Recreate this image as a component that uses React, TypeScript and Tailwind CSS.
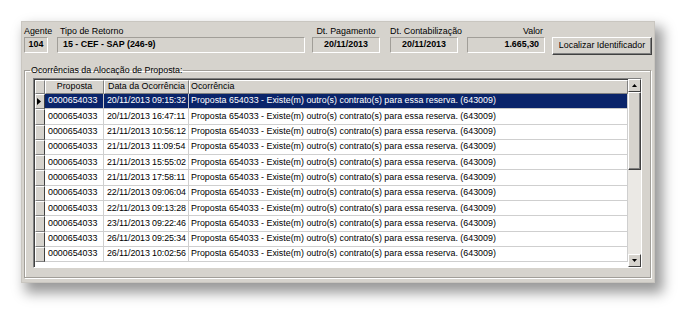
const rows = [
  "20/11/2013 09:15:32",
  "20/11/2013 16:47:11",
  "21/11/2013 10:56:12",
  "21/11/2013 11:09:54",
  "21/11/2013 15:55:02",
  "21/11/2013 17:58:11",
  "22/11/2013 09:06:04",
  "22/11/2013 09:13:28",
  "23/11/2013 09:22:46",
  "26/11/2013 09:25:34",
  "26/11/2013 10:02:56",
];

const msg = "Proposta 654033 - Existe(m) outro(s) contrato(s) para essa reserva. (643009)";

const Field = ({ children, className }: { children: React.ReactNode; className: string }) => (
  <div
    className={`flex h-[16px] items-center border border-t-[#a19e98] border-l-[#a19e98] border-b-white border-r-white bg-[#d6d3cd] px-[5px] font-bold ${className}`}
  >
    {children}
  </div>
);

const Label = ({ children, className = "" }: { children: React.ReactNode; className?: string }) => (
  <div className={`h-[11px] whitespace-nowrap leading-[11px] ${className}`}>{children}</div>
);

const Arrow = ({ down }: { down?: boolean }) => (
  <div className="flex h-[13px] w-[13px] items-center justify-center border border-t-white border-l-white border-b-[#404040] border-r-[#404040] bg-[#d6d3cd]">
    <svg width="5" height="3" viewBox="0 0 5 3">
      <polygon points={down ? "0,0 5,0 2.5,3" : "0,3 5,3 2.5,0"} fill="#000" />
    </svg>
  </div>
);

const App = () => {
  return (
    <div className="min-h-screen bg-white pl-[21px] pt-[21px] font-['Liberation_Sans',Arial,sans-serif] text-[8.9px] text-black">
      <div className="h-[262px] w-[634px] border border-[#c9c6c0] bg-[#d6d3cd] px-[2px] pt-[4px] shadow-[6px_8px_12px_2px_rgba(0,0,0,0.4)]">
        {/* top fields */}
        <div className="flex items-start">
          <div className="flex w-[24px] flex-col">
            <Label>Agente</Label>
            <Field className="justify-center">104</Field>
          </div>
          <div className="ml-[9px] flex w-[248px] flex-col">
            <Label className="pl-[3px]">Tipo de Retorno</Label>
            <Field className="justify-start">15 - CEF - SAP (246-9)</Field>
          </div>
          <div className="ml-[7px] flex w-[68px] flex-col">
            <Label className="text-center">Dt. Pagamento</Label>
            <Field className="justify-center">20/11/2013</Field>
          </div>
          <div className="ml-[10px] flex w-[68px] flex-col">
            <Label className="text-center">Dt. Contabilização</Label>
            <Field className="justify-center">20/11/2013</Field>
          </div>
          <div className="ml-[9px] flex w-[78px] flex-col">
            <Label className="pr-[2px] text-right">Valor</Label>
            <Field className="justify-end">1.665,30</Field>
          </div>
          <button className="ml-[7px] mt-[11px] flex h-[18px] w-[100px] items-center justify-center whitespace-nowrap border border-t-white border-l-white border-b-[#404040] border-r-[#404040] bg-[#d6d3cd] shadow-[inset_-1px_-1px_0_#808080]">
            Localizar Identificador
          </button>
        </div>

        {/* group box */}
        <fieldset className="mt-[10px] h-[213px] w-[626px] border border-[#a19e98] px-[8px] pb-[6px] pt-[2px] shadow-[inset_1px_1px_0_#fff,1px_1px_0_#fff]">
          <legend className="-ml-[3px] px-[1px] leading-[11px]">Ocorrências da Alocação de Proposta:</legend>
          <div className="flex h-[190px] w-[609px] border border-t-[#808080] border-l-[#808080] border-b-white border-r-white bg-white shadow-[inset_1px_1px_0_#404040]">
            <div className="flex flex-1 flex-col pl-[1px] pt-[1px]">
              {/* header */}
              <div className="flex h-[14px] bg-[#d6d3cd]">
                <div className="w-[10px] border border-t-white border-l-white border-b-[#808080] border-r-[#808080]" />
                <div className="flex w-[59px] items-center justify-center border border-t-white border-l-white border-b-[#808080] border-r-[#808080]">
                  Proposta
                </div>
                <div className="flex w-[85px] items-center justify-center border border-t-white border-l-white border-b-[#808080] border-r-[#808080]">
                  Data da Ocorrência
                </div>
                <div className="flex flex-1 items-center border border-t-white border-l-white border-b-[#808080] border-r-[#808080] pl-[1px]">
                  Ocorrência
                </div>
              </div>
              {rows.map((d, i) => {
                const sel = i === 0;
                const cell = sel
                  ? "bg-[#0a246a] text-white border-r border-b border-[#c8c8c8]"
                  : "bg-white border-r border-b border-[#cfcfcf]";
                return (
                  <div key={d} className="flex h-[15.3px]">
                    <div className="flex w-[10px] items-center border border-t-white border-l-white border-b-[#808080] border-r-[#404040] bg-[#d6d3cd] pl-[1px]">
                      {sel && (
                        <svg width="4" height="7" viewBox="0 0 4 7">
                          <polygon points="0,0 4,3.5 0,7" fill="#000" />
                        </svg>
                      )}
                    </div>
                    <div className={`flex w-[59px] items-center pl-[3px] ${cell}`}>0000654033</div>
                    <div className={`flex w-[85px] items-center whitespace-nowrap pl-[3px] tracking-[-0.1px] ${cell}`}>{d}</div>
                    <div className={`flex flex-1 items-center pl-[2px] ${cell}`}>{msg}</div>
                  </div>
                );
              })}
            </div>
            {/* scrollbar */}
            <div className="flex w-[13px] flex-col bg-[#ebe9e5]">
              <Arrow />
              <div className="h-[78px] border border-t-white border-l-white border-b-[#404040] border-r-[#404040] bg-[#d6d3cd] shadow-[inset_-1px_-1px_0_#808080]" />
              <div className="flex-1" />
              <Arrow down />
            </div>
          </div>
        </fieldset>
      </div>
    </div>
  );
};

export default App;
